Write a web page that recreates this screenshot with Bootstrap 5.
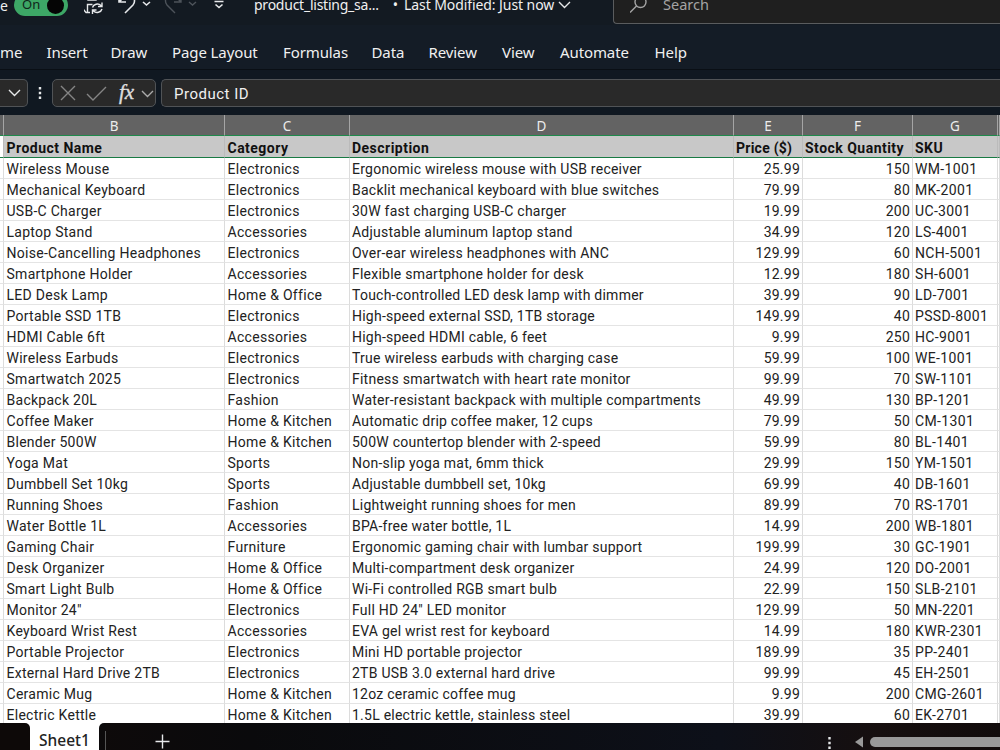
<!DOCTYPE html>
<html lang="en">
<head>
<meta charset="utf-8">
<title>product_listing_sample</title>
<link href="https://cdn.jsdelivr.net/npm/bootstrap@5.3.0/dist/css/bootstrap.min.css" rel="stylesheet">
<style>
body{height:750px;background:#131a22;font-family:"Noto Sans",sans-serif;color:#f0f0f0}
svg{display:block;flex:none;fill:none;stroke:#e6e8ea;stroke-width:1.4}
.app{width:1000px;height:750px}
.titlebar{height:40px;margin-top:-15px;font-size:14px;white-space:nowrap}
.autosave{width:14px}
.switch-on{width:54px;height:22px;background:#3da766;color:#10251a;font-size:13px;padding:0 4px 0 8px}
.knob{width:17px;height:17px;background:#050505}
.docname{margin-left:26px;width:150px;letter-spacing:-.24px}
.modified{width:176px;letter-spacing:-.08px}
.docname,.modified{padding-bottom:1px}
.searchbox{width:387px;height:38px;margin-left:33px;background:#1f1f1f;border:1px solid #5a5c5e;border-right:0;border-radius:4px 0 0 4px;color:#a4a4a4;padding-left:16px;font-size:14.5px}
.ribbon{height:45px;border-bottom:1px solid #0a0f15;font-size:15px;letter-spacing:-.1px;background:#141c26}
.ribbon .nav-link{color:#f0f0f0;padding:0;white-space:nowrap;line-height:20px;margin-top:9px}
.ribbon .nav-item{flex:none}
.formula{height:45px;background:#101821}
.box{height:28px;background:#292929;border:1px solid #505356;border-radius:5px}
.namebox{width:28px;border-left:0;border-radius:0 5px 5px 0}
.entry{border-right:0;border-radius:5px 0 0 5px;padding:3px 0 0 12px;font-family:Roboto,sans-serif;font-size:15px;letter-spacing:.5px;margin-left:5px}
.sheet{height:608px;background:#fff;font-family:Roboto,sans-serif}
.grid{table-layout:fixed;width:1000px;border-collapse:separate;border-spacing:0;color:#222;font-size:14px;letter-spacing:.24px}
.grid td,.grid th{height:21px;line-height:18px;padding:2px 2px 0;border-right:1px solid #dcdcdc;border-bottom:1px solid #e4e4e4;white-space:nowrap;overflow:hidden}
.grid td:nth-child(2){letter-spacing:.27px}
.grid td:nth-child(3){letter-spacing:.3px}
.grid td:nth-child(2),.grid td:nth-child(3),.grid th:nth-child(2),.grid th:nth-child(3){padding-left:2.5px}
.grid td:nth-child(7){letter-spacing:.35px}
.grid .letters th{background:#636363;color:#ececec;font-weight:400;text-align:center;border-right-color:#a5a5a5;border-bottom:1px solid #1f8a4c;font-family:"Noto Sans",sans-serif;font-size:13.5px}
.grid .heads th{height:22px;background:#c8c8c8;color:#111;font-weight:700;letter-spacing:.48px;border-bottom:1px solid #187a43;border-right-color:#bbb}
.grid .heads th:first-child{background:#fff}
.grid .heads th:nth-child(5){letter-spacing:.25px}
.grid .num{text-align:right}
.tabs{height:27px;background:linear-gradient(90deg,#100a09 0,#0a0a0c 25%,#0d1019 72%,#160f0f 88%,#110b0b)}
.tab-cap{width:30px;background:#0d0908;border-top-right-radius:5px}
.tab-on{width:69px;background:#fff;color:#222;font-size:15.5px;font-weight:500;line-height:34px}
.tab-rest{width:6px;background:#0c0a0b;border-top-left-radius:5px}
</style>
<script src="https://cdn.jsdelivr.net/npm/bootstrap@5.3.0/dist/js/bootstrap.bundle.min.js"></script>
</head>
<body class="overflow-hidden">
<div class="app d-flex flex-column overflow-hidden">
<header class="titlebar d-flex align-items-center flex-shrink-0">
  <span class="autosave flex-shrink-0">e</span>
  <span class="switch-on rounded-pill d-flex align-items-center justify-content-between flex-shrink-0">On<i class="knob rounded-circle"></i></span>
  <svg class="ms-3" width="144" height="30" viewBox="84 -10 144 30">
    <path d="M83-4V9l3 3.500h4M87.500 12V4.500h5M83-4h18M101-4V0M88-4v4h8v-4M92.500 7.500a5 4.500 0 0 1 8.500-2l1 1M102 2.500v4h-4M102 9a5 4.500 0 0 1-8.500 2l-1-1M92.500 14v-4h4"/>
    <path d="M119-5V2h7M119 2l5-5a6 6 0 0 1 9 8l-8 8" stroke-width="1.6"/><path d="M143 2l3.500 3 3.500-3" stroke-width="1.6"/>
    <g stroke="#4d535a"><path d="M181-5V2h-7M181 2l-5-5a6 6 0 0 0-9 8l8 8"/><path d="M189 2l3.500 3 3.500-3"/></g>
    <path d="M214.500 1.500h9M215.500 4.500l3.500 3 3.500-3" stroke-width="1.6"/>
  </svg>
  <span class="docname flex-shrink-0">product_listing_sa...<span style="margin-left:14px">•</span></span>
  <span class="d-flex align-items-center modified flex-shrink-0">Last Modified: Just now<svg class="ms-1" width="13" height="10" viewBox="0 0 13 10"><path d="M1 2l5.500 5.500L12 2"/></svg></span>
  <div class="searchbox d-flex align-items-center flex-shrink-0"><svg width="17" height="18" viewBox="0 0 17 18" style="stroke:#a4a4a4"><circle cx="10.500" cy="6" r="5.500"/><path d="M6.500 10L0 16.500"/></svg><span class="ms-3">Search</span></div>
</header>
<nav class="ribbon flex-shrink-0"><ul class="nav flex-nowrap align-items-center h-100" id="menu"></ul></nav>
<div class="formula d-flex align-items-center flex-shrink-0">
  <div class="box namebox d-flex align-items-center"><svg class="ms-2" width="13" height="10" viewBox="0 0 13 10"><path d="M1 2l5.500 5.500L12 2"/></svg></div>
  <svg width="24" height="20" viewBox="28 0 24 20"><path d="M40 4v12" stroke-width="2.400" stroke-dasharray="2.400 2.400"/></svg>
  <div class="box"><svg width="102" height="26" viewBox="53 80 102 26"><path d="M61 86l14 14M75 86L61 100M87 94l6 6 13-13" style="stroke:#858585"/><text x="119" y="99" font-family="Liberation Serif,serif" font-style="italic" font-size="21" fill="#ddd" stroke="#ddd" stroke-width=".4">fx</text><path d="M142 91l5.500 5.500L153 91" style="stroke:#aaa"/></svg></div>
  <div class="box entry flex-grow-1 d-flex align-items-center">Product ID</div>
</div>
<main class="sheet flex-shrink-0 overflow-hidden">
<table class="grid">
<colgroup><col style="width:4px"><col style="width:221px"><col style="width:125px"><col style="width:384px"><col style="width:69px"><col style="width:110px"><col style="width:85px"><col style="width:2px"></colgroup>
<thead>
<tr class="letters"><th></th><th>B</th><th>C</th><th>D</th><th>E</th><th>F</th><th>G</th><th></th></tr>
<tr class="heads"><th></th><th>Product Name</th><th>Category</th><th>Description</th><th>Price ($)</th><th>Stock Quantity</th><th>SKU</th><th></th></tr>
</thead><tbody id="rows"></tbody></table>
</main>
<footer class="tabs d-flex flex-shrink-0">
  <div class="bg-white d-flex"><div class="tab-cap"></div><div class="tab-on text-center">Sheet1</div><div class="tab-rest"></div></div>
  <svg width="895" height="27" viewBox="105 723 895 27"><path d="M105.500 731v19" style="stroke:#555;stroke-width:1"/><path d="M155.500 741.500h14M162.500 734.500v14"/><path d="M829.500 737v13" stroke-width="2.400" stroke-dasharray="2.400 2.400"/><path d="M863 736.500v11l-8-5.500z" fill="#999" stroke="none"/><rect x="870" y="737" width="140" height="10" rx="5" fill="#999" stroke="none"/></svg>
</footer>
</div>
<script>
const data=`Wireless Mouse|Electronics|Ergonomic wireless mouse with USB receiver|25.99|150|WM-1001
Mechanical Keyboard|Electronics|Backlit mechanical keyboard with blue switches|79.99|80|MK-2001
USB-C Charger|Electronics|30W fast charging USB-C charger|19.99|200|UC-3001
Laptop Stand|Accessories|Adjustable aluminum laptop stand|34.99|120|LS-4001
Noise-Cancelling Headphones|Electronics|Over-ear wireless headphones with ANC|129.99|60|NCH-5001
Smartphone Holder|Accessories|Flexible smartphone holder for desk|12.99|180|SH-6001
LED Desk Lamp|Home & Office|Touch-controlled LED desk lamp with dimmer|39.99|90|LD-7001
Portable SSD 1TB|Electronics|High-speed external SSD, 1TB storage|149.99|40|PSSD-8001
HDMI Cable 6ft|Accessories|High-speed HDMI cable, 6 feet|9.99|250|HC-9001
Wireless Earbuds|Electronics|True wireless earbuds with charging case|59.99|100|WE-1001
Smartwatch 2025|Electronics|Fitness smartwatch with heart rate monitor|99.99|70|SW-1101
Backpack 20L|Fashion|Water-resistant backpack with multiple compartments|49.99|130|BP-1201
Coffee Maker|Home & Kitchen|Automatic drip coffee maker, 12 cups|79.99|50|CM-1301
Blender 500W|Home & Kitchen|500W countertop blender with 2-speed|59.99|80|BL-1401
Yoga Mat|Sports|Non-slip yoga mat, 6mm thick|29.99|150|YM-1501
Dumbbell Set 10kg|Sports|Adjustable dumbbell set, 10kg|69.99|40|DB-1601
Running Shoes|Fashion|Lightweight running shoes for men|89.99|70|RS-1701
Water Bottle 1L|Accessories|BPA-free water bottle, 1L|14.99|200|WB-1801
Gaming Chair|Furniture|Ergonomic gaming chair with lumbar support|199.99|30|GC-1901
Desk Organizer|Home & Office|Multi-compartment desk organizer|24.99|120|DO-2001
Smart Light Bulb|Home & Office|Wi-Fi controlled RGB smart bulb|22.99|150|SLB-2101
Monitor 24"|Electronics|Full HD 24" LED monitor|129.99|50|MN-2201
Keyboard Wrist Rest|Accessories|EVA gel wrist rest for keyboard|14.99|180|KWR-2301
Portable Projector|Electronics|Mini HD portable projector|189.99|35|PP-2401
External Hard Drive 2TB|Electronics|2TB USB 3.0 external hard drive|99.99|45|EH-2501
Ceramic Mug|Home & Kitchen|12oz ceramic coffee mug|9.99|200|CMG-2601
Electric Kettle|Home & Kitchen|1.5L electric kettle, stainless steel|39.99|60|EK-2701`;
const body=document.getElementById('rows');
for(const line of data.split('\n')){
  const tr=body.insertRow();
  ['',...line.split('|'),''].forEach((t,i)=>{const c=tr.insertCell();c.textContent=t;if(i===4||i===5)c.className='num'});
}
// menu entries with their column widths
const menu=[['me',46.5],['Insert',64],['Draw',61.5],['Page Layout',111],['Formulas',88.5],['Data',57],['Review',73.5],['View',58],['Automate',94.5],['Help',60]];
document.getElementById('menu').innerHTML=menu.map(([t,w])=>`<li class="nav-item" style="width:${w}px"><a class="nav-link" href="#">${t}</a></li>`).join('');
</script>
</body>
</html>
